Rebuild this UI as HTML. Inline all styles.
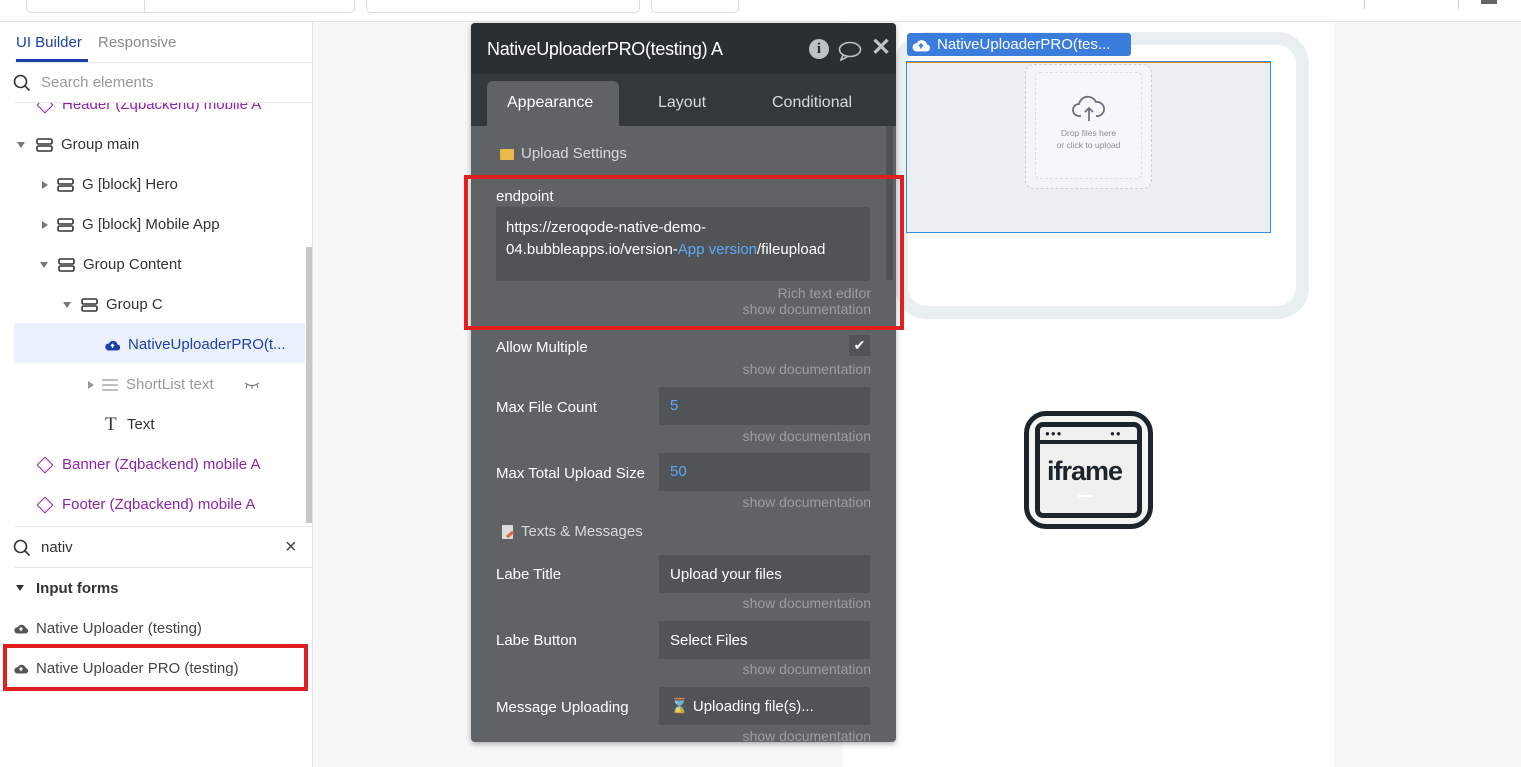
<!DOCTYPE html>
<html><head><meta charset="utf-8"><style>
*{box-sizing:border-box;margin:0;padding:0}
body{width:1521px;height:767px;overflow:hidden;background:#f7f7f7;font-family:"Liberation Sans",sans-serif;position:relative;font-size:15px;color:#333}
.a{position:absolute;white-space:nowrap}
.row{position:absolute;height:40px;line-height:40px;font-size:15px;color:#333;display:flex;align-items:center;gap:8px}
.tri{width:0;height:0;border-left:4px solid transparent;border-right:4px solid transparent;border-top:6px solid #777}
.trr{width:0;height:0;border-top:4px solid transparent;border-bottom:4px solid transparent;border-left:6px solid #777}
.dia{width:12px;height:12px;border:1.5px solid #8e24aa;transform:rotate(45deg);margin:0 3px}
.pur{color:#8e24aa}
.lbl{position:absolute;left:25px;color:#fff;font-size:15px}
.inp{position:absolute;left:188px;width:211px;height:38px;background:#505457;border-radius:2px;color:#fff;font-size:15px;line-height:38px;padding-left:11px}
.doc{position:absolute;right:25px;color:#9b9fa2;font-size:14px}
</style></head><body>
<div class="a" style="left:0;top:0;width:1521px;height:22px;background:#fff;border-bottom:1px solid #e4e4e4"></div>
<div class="a" style="left:26px;top:-5px;width:329px;height:18px;border:1px solid #ddd;border-radius:5px;background:#fff"></div>
<div class="a" style="left:144px;top:0;width:1px;height:13px;background:#ddd"></div>
<div class="a" style="left:366px;top:-5px;width:274px;height:18px;border:1px solid #ddd;border-radius:5px;background:#fff"></div>
<div class="a" style="left:651px;top:-5px;width:88px;height:18px;border:1px solid #ddd;border-radius:5px;background:#fff"></div>
<div class="a" style="left:1364px;top:0;width:1px;height:9px;background:#ccc"></div>
<div class="a" style="left:1458px;top:0;width:1px;height:9px;background:#ccc"></div>
<div class="a" style="left:1481px;top:0;width:16px;height:4px;background:#666"></div>
<div class="a" style="left:0;top:22px;width:313px;height:745px;background:#fff;border-right:1px solid #e4e4e4"></div>
<div class="a" style="left:16px;top:34px;font-size:15px;color:#1c3faa">UI Builder</div>
<div class="a" style="left:98px;top:34px;font-size:15px;color:#888">Responsive</div>
<div class="a" style="left:16px;top:59px;width:72px;height:3px;background:#1c3faa"></div>
<div class="a" style="left:14px;top:62px;width:298px;height:1px;background:#e6e6e6"></div>
<svg class="a" style="left:13px;top:74px" width="18" height="18" viewBox="0 0 18 18"><circle cx="7.5" cy="7.5" r="6" fill="none" stroke="#333" stroke-width="1.6"/><path d="M12 12l4.5 4.5" stroke="#333" stroke-width="1.6"/></svg>
<div class="a" style="left:41px;top:74px;color:#999">Search elements</div>
<div class="a" style="left:14px;top:102px;width:298px;height:1px;background:#e6e6e6"></div>
<div class="a" style="left:0;top:103px;width:312px;height:420px;overflow:hidden">
 <div class="row pur" style="left:36px;top:-18px"><div class="dia"></div>Header (Zqbackend) mobile A</div>
 <div class="row" style="left:17px;top:22px"><div class="tri"></div><svg width="17" height="14" style="margin-left:3px"><rect x="1" y="1" width="15" height="5" rx="1.5" fill="none" stroke="#333" stroke-width="1.6"/><rect x="1" y="8" width="15" height="5" rx="1.5" fill="none" stroke="#333" stroke-width="1.6"/></svg>Group main</div>
 <div class="row" style="left:42px;top:62px"><div class="trr"></div><svg width="17" height="14" style="margin-left:1px"><rect x="1" y="1" width="15" height="5" rx="1.5" fill="none" stroke="#333" stroke-width="1.6"/><rect x="1" y="8" width="15" height="5" rx="1.5" fill="none" stroke="#333" stroke-width="1.6"/></svg>G [block] Hero</div>
 <div class="row" style="left:42px;top:102px"><div class="trr"></div><svg width="17" height="14" style="margin-left:1px"><rect x="1" y="1" width="15" height="5" rx="1.5" fill="none" stroke="#333" stroke-width="1.6"/><rect x="1" y="8" width="15" height="5" rx="1.5" fill="none" stroke="#333" stroke-width="1.6"/></svg>G [block] Mobile App</div>
 <div class="row" style="left:40px;top:142px"><div class="tri"></div><svg width="17" height="14" style="margin-left:2px"><rect x="1" y="1" width="15" height="5" rx="1.5" fill="none" stroke="#333" stroke-width="1.6"/><rect x="1" y="8" width="15" height="5" rx="1.5" fill="none" stroke="#333" stroke-width="1.6"/></svg>Group Content</div>
 <div class="row" style="left:63px;top:182px"><div class="tri"></div><svg width="17" height="14" style="margin-left:2px"><rect x="1" y="1" width="15" height="5" rx="1.5" fill="none" stroke="#333" stroke-width="1.6"/><rect x="1" y="8" width="15" height="5" rx="1.5" fill="none" stroke="#333" stroke-width="1.6"/></svg>Group C</div>
 <div class="a" style="left:14px;top:220px;width:291px;height:40px;background:#eaf1fd"></div>
 <div class="row" style="left:105px;top:222px;color:#1c3faa"><svg width="15" height="12" viewBox="0 0 15 12"><path d="M3.5 11.5h8.5a3 3 0 0 0 .5-6A4.5 4.5 0 0 0 4 4.5a3.5 3.5 0 0 0-.5 7z" fill="#1c3faa"/><path d="M7.5 9V5.5M5.8 7L7.5 5.3 9.2 7" stroke="#fff" stroke-width="1.3" fill="none"/></svg>NativeUploaderPRO(t...</div>
 <div class="row" style="left:88px;top:262px;color:#999"><div class="trr" style="border-left-color:#999"></div><svg width="16" height="12"><path d="M0 1h16M0 6h16M0 11h16" stroke="#aaa" stroke-width="1.5"/></svg>ShortList text<svg width="16" height="8" style="margin-left:22px"><path d="M1 2q7 5 14 0M3 4l-1 3M8 5v3M13 4l1 3" stroke="#666" fill="none" stroke-width="1"/></svg></div>
 <div class="row" style="left:105px;top:302px"><span style="font-family:'Liberation Serif',serif;font-size:19px;width:14px">T</span>Text</div>
 <div class="row pur" style="left:36px;top:342px"><div class="dia"></div>Banner (Zqbackend) mobile A</div>
 <div class="row pur" style="left:36px;top:382px"><div class="dia"></div>Footer (Zqbackend) mobile A</div>
</div>
<div class="a" style="left:306px;top:247px;width:6px;height:276px;background:#c8c8c8"></div>
<div class="a" style="left:14px;top:526px;width:298px;height:1px;background:#e6e6e6"></div>
<svg class="a" style="left:13px;top:539px" width="18" height="18" viewBox="0 0 18 18"><circle cx="7.5" cy="7.5" r="6" fill="none" stroke="#333" stroke-width="1.6"/><path d="M12 12l4.5 4.5" stroke="#333" stroke-width="1.6"/></svg>
<div class="a" style="left:41px;top:539px;color:#333">nativ</div>
<div class="a" style="left:285px;top:536px;font-size:20px;color:#444">×</div>
<div class="a" style="left:14px;top:567px;width:298px;height:1px;background:#e6e6e6"></div>
<div class="a" style="left:16px;top:585px"><div class="tri" style="border-top-color:#333"></div></div>
<div class="a" style="left:36px;top:580px;font-weight:bold;color:#333">Input forms</div>
<svg class="a" style="left:14px;top:623px" width="14" height="11" viewBox="0 0 15 12"><path d="M3.5 11.5h8.5a3 3 0 0 0 .5-6A4.5 4.5 0 0 0 4 4.5a3.5 3.5 0 0 0-.5 7z" fill="#555"/><path d="M7.5 9V5.5M5.8 7L7.5 5.3 9.2 7" stroke="#fff" stroke-width="1.3" fill="none"/></svg>
<div class="a" style="left:36px;top:620px;color:#444">Native Uploader (testing)</div>
<svg class="a" style="left:14px;top:663px" width="14" height="11" viewBox="0 0 15 12"><path d="M3.5 11.5h8.5a3 3 0 0 0 .5-6A4.5 4.5 0 0 0 4 4.5a3.5 3.5 0 0 0-.5 7z" fill="#555"/><path d="M7.5 9V5.5M5.8 7L7.5 5.3 9.2 7" stroke="#fff" stroke-width="1.3" fill="none"/></svg>
<div class="a" style="left:36px;top:660px;color:#444">Native Uploader PRO (testing)</div>
<div class="a" style="left:3px;top:644px;width:305px;height:47px;border:4px solid #e02020"></div>
<div class="a" style="left:843px;top:22px;width:491px;height:745px;background:#fff"></div>
<div class="a" style="left:895px;top:32px;width:414px;height:287px;border:13px solid #e9eef1;border-radius:32px;background:#fff"></div>
<div class="a" style="left:906px;top:61px;width:365px;height:172px;background:#ebeff2;border:1.5px solid #3b8fe0;box-shadow:inset 0 1px 0 #e8870a"></div>
<div class="a" style="left:1025px;top:64px;width:127px;height:125px;border:1px dashed #ccd;border-radius:9px;background:#f3f5f8"></div>
<div class="a" style="left:1035px;top:72px;width:107px;height:107px;border:1px dashed #dde;border-radius:5px;background:#f6f7fa"></div>
<svg class="a" style="left:1071px;top:94px" width="36" height="28" viewBox="0 0 36 28"><path d="M10 22H8a6 6 0 0 1 0-12 9 9 0 0 1 17-2 7 7 0 0 1 2 14h-2" fill="none" stroke="#6b7280" stroke-width="1.8"/><path d="M18 27V14M14 18l4-4 4 4" fill="none" stroke="#6b7280" stroke-width="1.8"/></svg>
<div class="a" style="left:1025px;top:127px;width:127px;text-align:center;font-size:8.5px;color:#8a8f99;line-height:12px">Drop files here<br>or click to upload</div>
<div class="a" style="left:907px;top:33px;width:224px;height:23px;background:#3b7ddd;border-radius:3px;color:#fff;font-size:15px;line-height:23px;padding-left:30px">NativeUploaderPRO(tes...</div>
<svg class="a" style="left:912px;top:38px" width="18" height="14" viewBox="0 0 15 12"><path d="M3.5 11.5h8.5a3 3 0 0 0 .5-6A4.5 4.5 0 0 0 4 4.5a3.5 3.5 0 0 0-.5 7z" fill="#fff"/><path d="M7.5 9V5.5M5.8 7L7.5 5.3 9.2 7" stroke="#3b7ddd" stroke-width="1.4" fill="none"/></svg>
<div class="a" style="left:1024px;top:411px;width:129px;height:118px;border:5px solid #1c252c;border-radius:22px;background:#f4f4f2"></div>
<div class="a" style="left:1035px;top:422px;width:107px;height:96px;border:5px solid #1c252c;border-radius:8px;background:#f0f0ee"></div>
<div class="a" style="left:1038px;top:440px;width:101px;height:4px;background:#1c252c"></div>
<div class="a" style="left:1045px;top:429px;font-size:8px;color:#1c252c;letter-spacing:1px">●●●</div>
<div class="a" style="left:1110px;top:429px;font-size:8px;color:#1c252c;letter-spacing:1px">●●</div>
<div class="a" style="left:1047px;top:456px;font-size:27px;font-weight:bold;color:#1c252c;letter-spacing:-1px">iframe</div>
<div class="a" style="left:1078px;top:495px;width:14px;height:2px;background:#fff"></div>
<div class="a" style="left:471px;top:23px;width:425px;height:719px;background:#5f6366;border-radius:4px;box-shadow:0 2px 6px rgba(0,0,0,.3);overflow:hidden">
 <div class="a" style="left:0;top:0;width:425px;height:51px;background:#2a3032"></div>
 <div class="a" style="left:16px;top:16px;color:#fff;font-size:18px;letter-spacing:-.3px">NativeUploaderPRO(testing) A</div>
 <div class="a" style="left:338px;top:16px;width:20px;height:20px;border-radius:50%;background:#bfc2c4;color:#2a3032;font-weight:bold;font-family:'Liberation Serif',serif;text-align:center;line-height:20px;font-size:15px">i</div>
 <svg class="a" style="left:367px;top:18px" width="24" height="20" viewBox="0 0 24 20"><ellipse cx="12" cy="8.5" rx="10.5" ry="7" fill="none" stroke="#bfc2c4" stroke-width="1.6"/><path d="M5 14l-2 5 6-3" fill="none" stroke="#bfc2c4" stroke-width="1.6"/></svg>
 <div class="a" style="left:400px;top:10px;color:#bfc2c4;font-size:24px;font-weight:bold">✕</div>
 <div class="a" style="left:0;top:51px;width:425px;height:52px;background:#33393b"></div>
 <div class="a" style="left:16px;top:58px;width:132px;height:45px;background:#5f6366;border-radius:6px 6px 0 0"></div>
 <div class="a" style="left:36px;top:71px;color:#fff;font-size:16px">Appearance</div>
 <div class="a" style="left:187px;top:71px;color:#d8dadb;font-size:16px">Layout</div>
 <div class="a" style="left:301px;top:71px;color:#d8dadb;font-size:16px">Conditional</div>
 <div class="a" style="left:415px;top:103px;width:7px;height:154px;background:#4f5356"></div>
 <div class="a" style="left:29px;top:126px;width:14px;height:11px;background:#e9b949;border-radius:1px"></div>
 <div class="a" style="left:50px;top:122px;color:#d8dadb;font-size:15px">Upload Settings</div>
 <div class="lbl" style="top:165px">endpoint</div>
 <div class="a" style="left:25px;top:184px;width:374px;height:74px;background:#505457;border-radius:2px"></div>
 <div class="a" style="left:35px;top:194px;color:#fff;font-size:15px;line-height:22px">https://zeroqode-native-demo-<br>04.bubbleapps.io/version-<span style="color:#5fa8f5">App version</span>/fileupload</div>
 <div class="doc" style="top:262px">Rich text editor</div>
 <div class="doc" style="top:278px">show documentation</div>
 <div class="lbl" style="top:316px">Allow Multiple</div>
 <div class="a" style="left:378px;top:312px;width:21px;height:21px;background:#505457;color:#fff;text-align:center;line-height:21px;font-size:14px">✔</div>
 <div class="doc" style="top:338px">show documentation</div>
 <div class="lbl" style="top:376px">Max File Count</div>
 <div class="inp" style="top:364px;color:#5fa8f5">5</div>
 <div class="doc" style="top:405px">show documentation</div>
 <div class="lbl" style="top:442px">Max Total Upload Size</div>
 <div class="inp" style="top:430px;color:#5fa8f5">50</div>
 <div class="doc" style="top:471px">show documentation</div>
 <div class="a" style="left:31px;top:502px;width:11px;height:14px;background:#dcdcdc;border-radius:1px"></div>
 <div class="a" style="left:35px;top:510px;width:8px;height:3px;background:#e06a3a;transform:rotate(-40deg)"></div>
 <div class="a" style="left:50px;top:500px;color:#d8dadb;font-size:15px">Texts &amp; Messages</div>
 <div class="lbl" style="top:543px">Labe Title</div>
 <div class="inp" style="top:532px;line-height:40px">Upload your files</div>
 <div class="doc" style="top:572px">show documentation</div>
 <div class="lbl" style="top:609px">Labe Button</div>
 <div class="inp" style="top:598px;line-height:40px">Select Files</div>
 <div class="doc" style="top:638px">show documentation</div>
 <div class="lbl" style="top:676px">Message Uploading</div>
 <div class="inp" style="top:664px;line-height:40px"><span style="color:#e9b949">⌛</span> Uploading file(s)...</div>
 <div class="doc" style="top:705px">show documentation</div>
</div>
<div class="a" style="left:464px;top:175px;width:440px;height:155px;border:4px solid #e02020"></div>
</body></html>
